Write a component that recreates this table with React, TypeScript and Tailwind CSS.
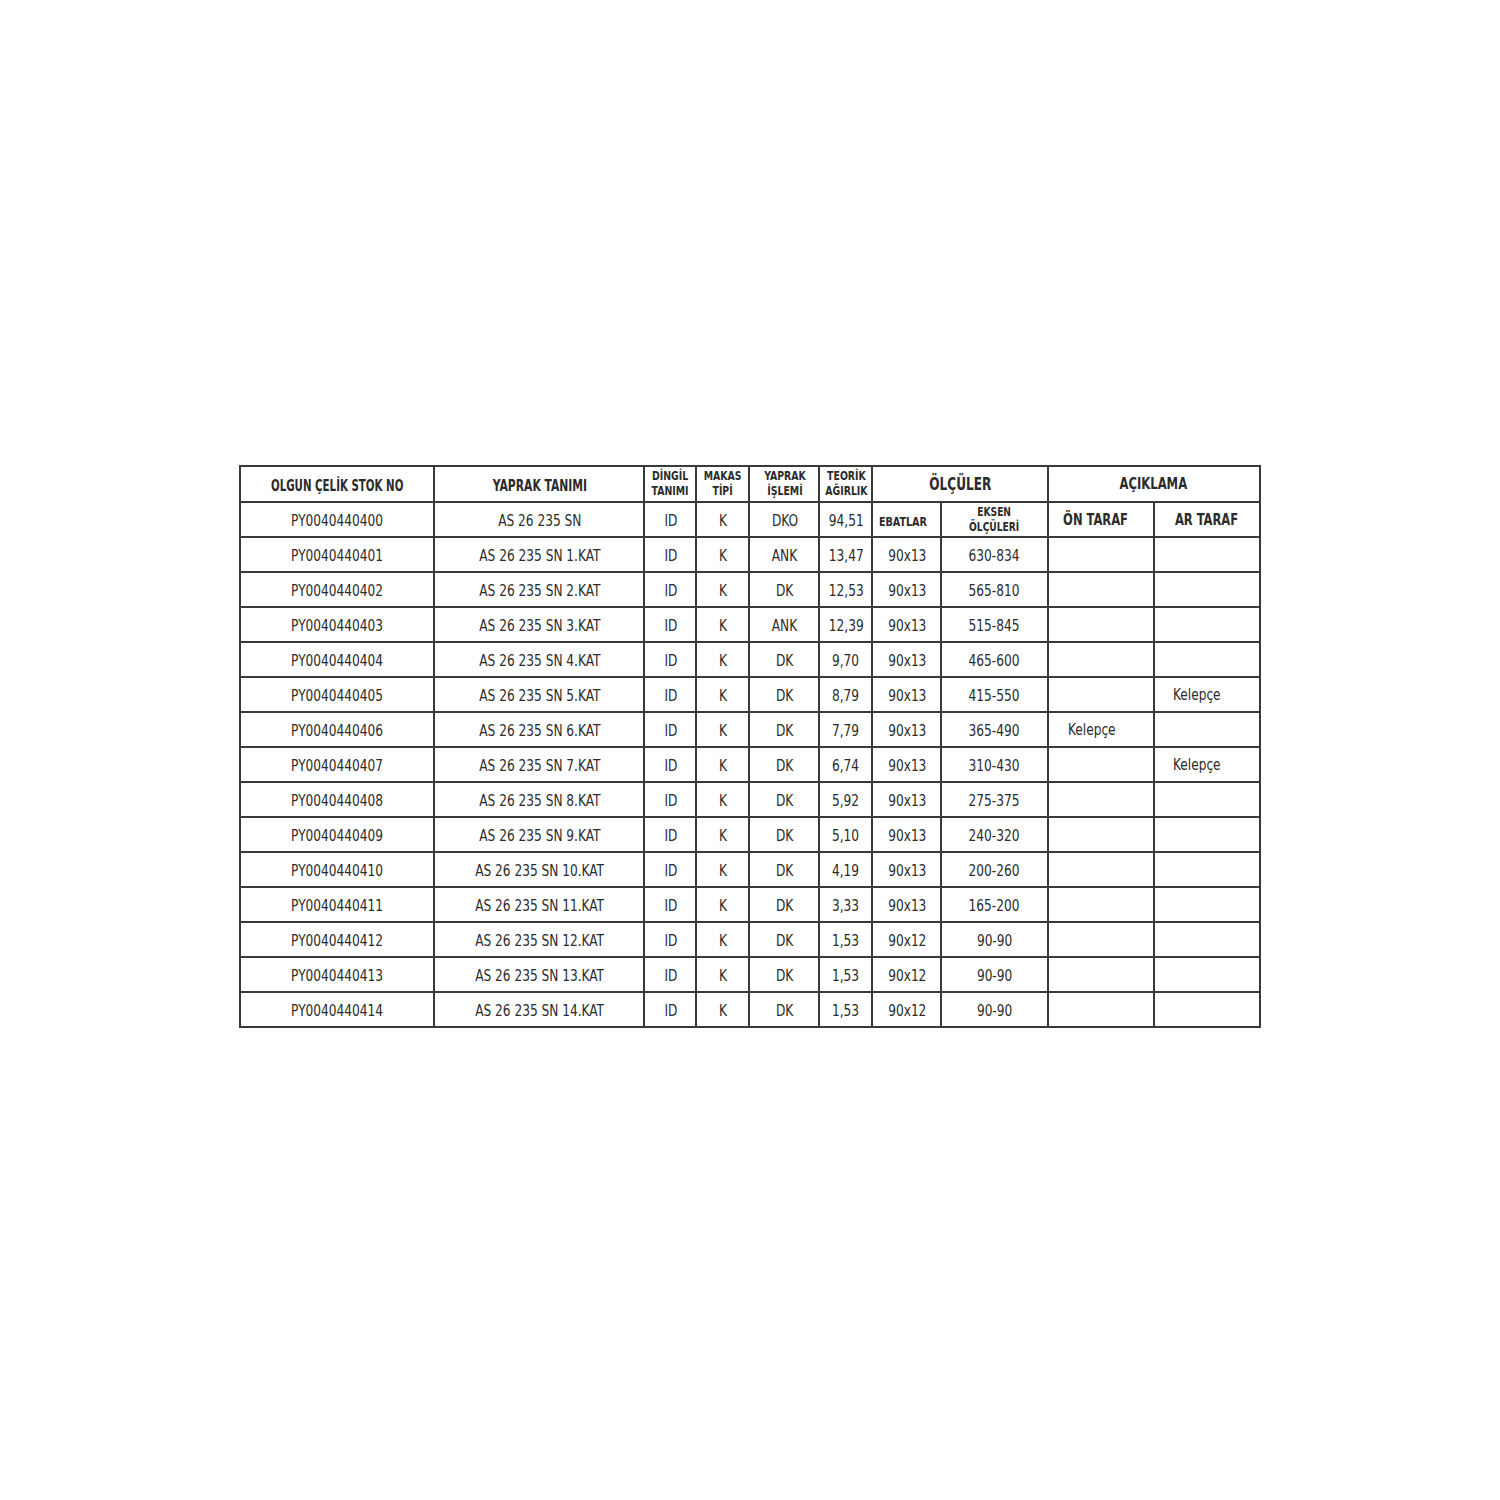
const rows = [
  ["PY0040440401", "AS 26 235 SN 1.KAT", "ANK", "13,47", "90x13", "630-834", "", ""],
  ["PY0040440402", "AS 26 235 SN 2.KAT", "DK", "12,53", "90x13", "565-810", "", ""],
  ["PY0040440403", "AS 26 235 SN 3.KAT", "ANK", "12,39", "90x13", "515-845", "", ""],
  ["PY0040440404", "AS 26 235 SN 4.KAT", "DK", "9,70", "90x13", "465-600", "", ""],
  ["PY0040440405", "AS 26 235 SN 5.KAT", "DK", "8,79", "90x13", "415-550", "", "Kelepçe"],
  ["PY0040440406", "AS 26 235 SN 6.KAT", "DK", "7,79", "90x13", "365-490", "Kelepçe", ""],
  ["PY0040440407", "AS 26 235 SN 7.KAT", "DK", "6,74", "90x13", "310-430", "", "Kelepçe"],
  ["PY0040440408", "AS 26 235 SN 8.KAT", "DK", "5,92", "90x13", "275-375", "", ""],
  ["PY0040440409", "AS 26 235 SN 9.KAT", "DK", "5,10", "90x13", "240-320", "", ""],
  ["PY0040440410", "AS 26 235 SN 10.KAT", "DK", "4,19", "90x13", "200-260", "", ""],
  ["PY0040440411", "AS 26 235 SN 11.KAT", "DK", "3,33", "90x13", "165-200", "", ""],
  ["PY0040440412", "AS 26 235 SN 12.KAT", "DK", "1,53", "90x12", "90-90", "", ""],
  ["PY0040440413", "AS 26 235 SN 13.KAT", "DK", "1,53", "90x12", "90-90", "", ""],
  ["PY0040440414", "AS 26 235 SN 14.KAT", "DK", "1,53", "90x12", "90-90", "", ""],
];

const cell = "border-2 border-[#3a3a3a] text-center align-middle p-0";

// condensed look: the font is squeezed horizontally, like the print original
function Sq({ children, className = "" }: { children: React.ReactNode; className?: string }) {
  return <span className={`inline-block whitespace-nowrap ${className}`}>{children}</span>;
}

function Small({ a, b }: { a: string; b: string }) {
  return (
    <th className={`${cell} font-bold text-[13px] leading-[15px] pb-[3px]`}>
      <Sq className="scale-x-[0.8]">
        {a}
        <br />
        {b}
      </Sq>
    </th>
  );
}

export default function App() {
  return (
    <div className="min-h-[1500px] bg-white flex justify-center pt-[465px] text-[#2b2b2b] [font-family:'DejaVu_Sans_Condensed','DejaVu_Sans',sans-serif]">
      <table className="table-fixed border-collapse w-[1019px] h-fit">
        <colgroup>
          <col className="w-[194px]" />
          <col className="w-[210px]" />
          <col className="w-[52px]" />
          <col className="w-[53px]" />
          <col className="w-[70px]" />
          <col className="w-[53px]" />
          <col className="w-[69px]" />
          <col className="w-[106px]" />
          <col className="w-[106px]" />
          <col className="w-[106px]" />
        </colgroup>
        <tbody>
          <tr className="h-[36px]">
            <th className={`${cell} font-bold text-[15px] pt-[4px]`}>
              <Sq className="scale-x-[0.76]">OLGUN ÇELİK STOK NO</Sq>
            </th>
            <th className={`${cell} font-bold text-[15px] pt-[4px]`}>
              <Sq className="scale-x-[0.8]">YAPRAK TANIMI</Sq>
            </th>
            <Small a="DİNGİL" b="TANIMI" />
            <Small a="MAKAS" b="TİPİ" />
            <Small a="YAPRAK" b="İŞLEMİ" />
            <Small a="TEORİK" b="AĞIRLIK" />
            <th colSpan={2} className={`${cell} font-bold text-[17.5px]`}>
              <Sq className="scale-x-[0.77]">ÖLÇÜLER</Sq>
            </th>
            <th colSpan={2} className={`${cell} font-bold text-[16.5px]`}>
              <Sq className="scale-x-[0.78]">AÇIKLAMA</Sq>
            </th>
          </tr>
          <tr className="h-[35px] text-[16.5px]">
            <td className={`${cell} pt-[4px]`}><Sq className="scale-x-[0.82]">PY0040440400</Sq></td>
            <td className={`${cell} pt-[4px]`}><Sq className="scale-x-[0.82]">AS 26 235 SN</Sq></td>
            <td className={`${cell} pt-[4px]`}><Sq className="scale-x-[0.82]">ID</Sq></td>
            <td className={`${cell} pt-[4px]`}><Sq className="scale-x-[0.82]">K</Sq></td>
            <td className={`${cell} pt-[4px]`}><Sq className="scale-x-[0.82]">DKO</Sq></td>
            <td className={`${cell} pt-[4px]`}><Sq className="scale-x-[0.82]">94,51</Sq></td>
            <td className={`${cell} text-left pl-[6px] font-bold text-[13px] pt-[5px]`}>
              <Sq className="scale-x-[0.82] origin-left">EBATLAR</Sq>
            </td>
            <td className={`${cell} font-bold text-[13px] leading-[15px] pb-[2px]`}>
              <Sq className="scale-x-[0.78]">
                EKSEN
                <br />
                ÖLÇÜLERİ
              </Sq>
            </td>
            <td className={`${cell} font-bold text-[16px] pr-[10px]`}>
              <Sq className="scale-x-[0.8]">ÖN TARAF</Sq>
            </td>
            <td className={`${cell} font-bold text-[16px]`}>
              <Sq className="scale-x-[0.8]">AR TARAF</Sq>
            </td>
          </tr>
          {rows.map((r) => (
            <tr key={r[0]} className="h-[35px] text-[16.5px]">
              <td className={`${cell} pt-[4px]`}><Sq className="scale-x-[0.82]">{r[0]}</Sq></td>
              <td className={`${cell} pt-[4px]`}><Sq className="scale-x-[0.82]">{r[1]}</Sq></td>
              <td className={`${cell} pt-[4px]`}><Sq className="scale-x-[0.82]">ID</Sq></td>
              <td className={`${cell} pt-[4px]`}><Sq className="scale-x-[0.82]">K</Sq></td>
              <td className={`${cell} pt-[4px]`}><Sq className="scale-x-[0.82]">{r[2]}</Sq></td>
              <td className={`${cell} pt-[4px]`}><Sq className="scale-x-[0.82]">{r[3]}</Sq></td>
              <td className={`${cell} pt-[4px]`}><Sq className="scale-x-[0.82]">{r[4]}</Sq></td>
              <td className={`${cell} pt-[4px]`}><Sq className="scale-x-[0.82]">{r[5]}</Sq></td>
              <td className={`${cell} text-left pl-[19px] pt-[2px]`}>
                <Sq className="scale-x-[0.82] origin-left">{r[6]}</Sq>
              </td>
              <td className={`${cell} text-left pl-[18px] pt-[2px]`}>
                <Sq className="scale-x-[0.82] origin-left">{r[7]}</Sq>
              </td>
            </tr>
          ))}
        </tbody>
      </table>
    </div>
  );
}
